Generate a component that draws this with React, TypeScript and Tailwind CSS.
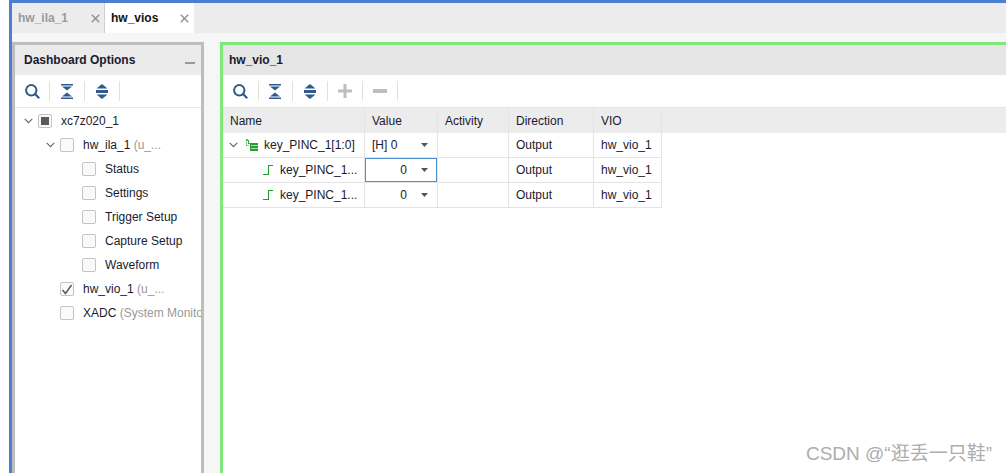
import { ReactNode } from 'react';

const SearchIcon = () => (
    <svg width="15" height="15" viewBox="0 0 15 15" fill="none">
        <circle cx="6.3" cy="6.3" r="5.2" stroke="#2f5a8f" strokeWidth="2" />
        <path d="M10 10L14.2 14.2" stroke="#2f5a8f" strokeWidth="2.2" />
    </svg>
);

const CollapseIcon = () => (
    <svg width="12" height="15" viewBox="0 0 12 15">
        <path d="M0 0H12V1.5H0Z M1 2.5H11L6 6.5Z M6 8.5L11 12.5H1Z M0 13.5H12V15H0Z" fill="#2f5a8f" />
    </svg>
);

const ExpandIcon = () => (
    <svg width="12" height="15" viewBox="0 0 12 15">
        <path d="M6 0L11.5 4.5H0.5Z M0 6H12V9H0Z M0.5 10.5H11.5L6 15Z" fill="#2f5a8f" />
    </svg>
);

const Chevron = () => (
    <svg width="9" height="6" viewBox="0 0 9 6" fill="none">
        <path d="M0.7 0.8L4.5 4.6L8.3 0.8" stroke="#666" strokeWidth="1.1" />
    </svg>
);

const Caret = () => (
    <svg width="7" height="4" viewBox="0 0 7 4">
        <path d="M0 0H7L3.5 4Z" fill="#555" />
    </svg>
);

const Pulse = () => (
    <svg width="10" height="10" viewBox="0 0 10 10" fill="none">
        <path d="M0 9.5H5.5V0.5H10" stroke="#1f9e2c" strokeWidth="1.1" />
    </svg>
);

const BusIcon = () => (
    <svg width="12" height="12" viewBox="0 0 12 12">
        <path d="M0 0H1.5V1H3V4H5V5H2V2H0Z" fill="#3aa63a" />
        <path d="M0 3H1V6H3V7H0Z" fill="#7ccf72" />
        <rect x="4" y="4" width="8" height="8" fill="#2f9a3a" />
        <rect x="5" y="6" width="7" height="1" fill="#a8e09c" />
        <rect x="5" y="9" width="7" height="1" fill="#a8e09c" />
    </svg>
);

const CloseX = () => (
    <svg width="9" height="9" viewBox="0 0 9 9" fill="none">
        <path d="M0.8 0.8L8.2 8.2M8.2 0.8L0.8 8.2" stroke="#8f8f8f" strokeWidth="1.4" />
    </svg>
);

const Sep = () => <div className="w-px h-[20px] bg-[#e0e0e0]" />;

const Check = ({ state }: { state?: 'checked' | 'partial' }) => (
    <div className="w-[14px] h-[14px] shrink-0 border border-[#c4c4c4] rounded-[2px] bg-[#fafafa] flex items-center justify-center">
        {state === 'partial' && <div className="w-[8px] h-[8px] bg-[#5a5a5a]" />}
        {state === 'checked' && (
            <svg width="12" height="11" viewBox="0 0 12 11" fill="none">
                <path d="M1.5 6L4.5 9.5L10.5 1" stroke="#555" strokeWidth="1.4" />
            </svg>
        )}
    </div>
);

const TreeRow = ({ indent, open, state, children }: { indent: string; open?: boolean; state?: 'checked' | 'partial'; children: ReactNode }) => (
    <div className={`h-6 flex items-center whitespace-nowrap ${indent}`}>
        <div className="w-[14px] shrink-0">{open && <Chevron />}</div>
        <Check state={state} />
        <div className="ml-[9px] text-[#1a1a2e]">{children}</div>
    </div>
);

const Cols = ({ className, cells }: { className: string; cells: ReactNode[] }) => {
    const widths = ['w-[142px]', 'w-[73px]', 'w-[71px]', 'w-[85px]', 'w-[68px]'];
    return (
        <div className={`flex ${className}`}>
            {cells.map((c, i) => (
                <div key={i} className={`${widths[i]} shrink-0 border-r border-[#e4e4e4] flex items-center`}>
                    {c}
                </div>
            ))}
        </div>
    );
};

const rows = [
    { name: 'key_PINC_1[1:0]', value: '[H] 0', top: true },
    { name: 'key_PINC_1...', value: '0', focus: true },
    { name: 'key_PINC_1...', value: '0' },
];

const App = () => {
    return (
        <div className="h-[473px] w-[1006px] overflow-hidden bg-white pl-[9px] relative text-[12px] text-[#1a1a2e] font-['Liberation_Sans',sans-serif]">
            <div className="h-full flex flex-col border-t-[3px] border-l-[3px] border-[#4d7fd0] bg-[#f6f6f6]">
                <div className="h-[30px] shrink-0 flex bg-[#ececec] font-bold">
                    <div className="w-[93px] flex items-center justify-between pl-[6px] pr-[4px] border-r border-[#cfcfcf] text-[#9a9a9a]">
                        <span>hw_ila_1</span>
                        <CloseX />
                    </div>
                    <div className="w-[89px] bg-white flex items-center justify-between pl-[6px] pr-[5px] text-[#111]">
                        <span>hw_vios</span>
                        <CloseX />
                    </div>
                </div>

                <div className="flex-1 flex pt-[9px] min-h-0">
                    <div className="w-[192px] shrink-0 border-t-[3px] border-x-[3px] border-[#bdbdbd] bg-white overflow-hidden">
                        <div className="h-[30px] bg-[#ebebeb] flex items-center justify-between pl-[9px] pr-[6px]">
                            <span className="font-bold text-[#1a1a2e]">Dashboard Options</span>
                            <div className="w-[10px] h-[2px] bg-[#9a9a9a] mt-[6px]" />
                        </div>
                        <div className="h-[33px] flex items-center pl-[10px] border-b border-[#e8e8e8]">
                            <SearchIcon />
                            <div className="ml-[9px] mr-[11px]"><Sep /></div>
                            <CollapseIcon />
                            <div className="ml-[11px] mr-[11px]"><Sep /></div>
                            <ExpandIcon />
                            <div className="ml-[11px]"><Sep /></div>
                        </div>
                        <div className="pt-px">
                            <TreeRow indent="pl-[9px]" open state="partial">xc7z020_1</TreeRow>
                            <TreeRow indent="pl-[31px]" open>hw_ila_1 <span className="text-[#999]">(u_...</span></TreeRow>
                            <TreeRow indent="pl-[53px]">Status</TreeRow>
                            <TreeRow indent="pl-[53px]">Settings</TreeRow>
                            <TreeRow indent="pl-[53px]">Trigger Setup</TreeRow>
                            <TreeRow indent="pl-[53px]">Capture Setup</TreeRow>
                            <TreeRow indent="pl-[53px]">Waveform</TreeRow>
                            <TreeRow indent="pl-[31px]" state="checked">hw_vio_1 <span className="text-[#999]">(u_...</span></TreeRow>
                            <TreeRow indent="pl-[31px]">XADC <span className="text-[#999]">(System Monitor)</span></TreeRow>
                        </div>
                    </div>

                    <div className="ml-[16px] flex-1 border-t-[3px] border-l-[3px] border-[#7fe87a] bg-white min-w-0">
                        <div className="h-[30px] bg-[#e6e6e6] flex items-center pl-[6px] font-bold">hw_vio_1</div>
                        <div className="h-[32px] flex items-center pl-[10px]">
                            <SearchIcon />
                            <div className="ml-[10px] mr-[10px]"><Sep /></div>
                            <CollapseIcon />
                            <div className="ml-[11px] mr-[11px]"><Sep /></div>
                            <ExpandIcon />
                            <div className="ml-[11px] mr-[10px]"><Sep /></div>
                            <svg width="14" height="14" viewBox="0 0 14 14">
                                <path d="M5.5 0H8.5V5.5H14V8.5H8.5V14H5.5V8.5H0V5.5H5.5Z" fill="#bdbdbd" />
                            </svg>
                            <div className="ml-[10px] mr-[10px]"><Sep /></div>
                            <div className="w-[14px] h-[4px] bg-[#bdbdbd]" />
                            <div className="ml-[10px]"><Sep /></div>
                        </div>
                        <div className="h-[26px] bg-[#ececec] border-t border-[#e4e4e4]">
                            <Cols
                                className="h-full"
                                cells={[
                                    <span className="pl-[7px]">Name</span>,
                                    <span className="pl-[7px]">Value</span>,
                                    <span className="pl-[7px]">Activity</span>,
                                    <span className="pl-[7px]">Direction</span>,
                                    <span className="pl-[7px]">VIO</span>,
                                ]}
                            />
                        </div>
                        {rows.map((r, i) => (
                            <Cols
                                key={i}
                                className="h-[25px] w-[439px] border-b border-[#e4e4e4]"
                                cells={[
                                    r.top ? (
                                        <div className="flex items-center pl-[6px]">
                                            <Chevron />
                                            <div className="ml-[8px] mr-[6px] flex"><BusIcon /></div>
                                            <span>{r.name}</span>
                                        </div>
                                    ) : (
                                        <div className="flex items-center pl-[40px]">
                                            <Pulse />
                                            <span className="ml-[7px]">{r.name}</span>
                                        </div>
                                    ),
                                    <div className={`w-full h-full flex items-center justify-between pr-[8px] ${r.focus ? 'border border-[#4a90d0]' : 'border border-transparent'}`}>
                                        <span className={r.top ? 'pl-[6px]' : 'w-[41px] text-right'}>{r.value}</span>
                                        <Caret />
                                    </div>,
                                    <span />,
                                    <span className="pl-[7px]">Output</span>,
                                    <span className="pl-[7px]">hw_vio_1</span>,
                                ]}
                            />
                        ))}
                    </div>
                </div>
            </div>
            <div className="absolute right-[14px] top-[442px] text-[19px] leading-[24px] text-[#adadad] whitespace-nowrap font-['Liberation_Sans','Noto_Sans_CJK_SC',sans-serif]">
                CSDN @“逛丢一只鞋”
            </div>
        </div>
    );
};

export default App;
